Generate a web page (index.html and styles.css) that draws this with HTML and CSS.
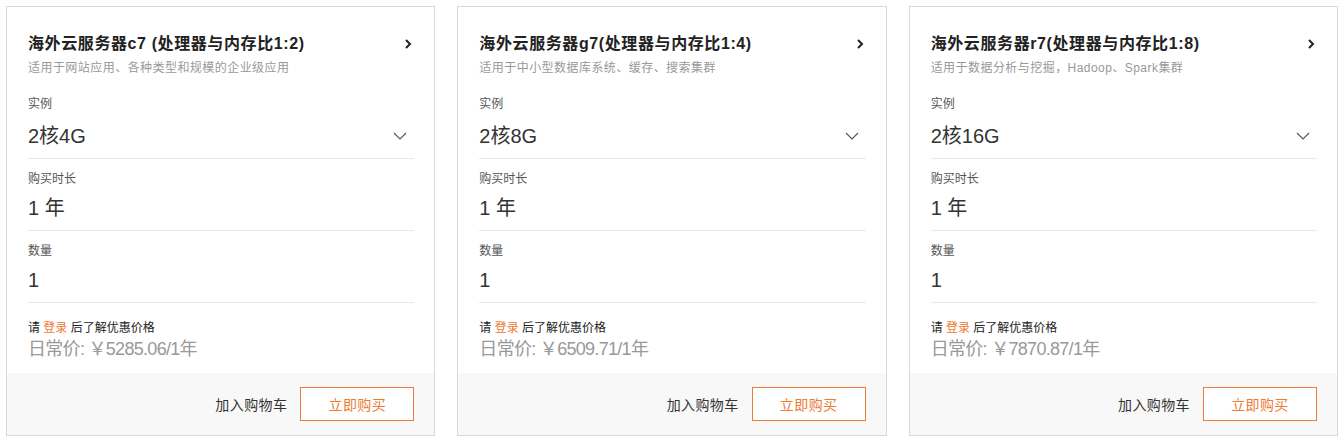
FILE: index.html
```html
<!DOCTYPE html>
<html lang="zh-CN">
<head>
<meta charset="utf-8">
<title>海外云服务器</title>
<link rel="stylesheet" href="styles.css">
</head>
<body>
<div class="cards">
  <div class="card">
    <div class="body">
      <div class="head">
        <div class="title">海外云服务器c7 (处理器与内存比1:2)</div>
        <svg class="arrow" width="8" height="12" viewBox="0 0 8 12"><path d="M2 2 L6 6 L2 10" fill="none" stroke="#222" stroke-width="2"/></svg>
      </div>
      <div class="desc">适用于网站应用、各种类型和规模的企业级应用</div>
      <div class="row first">
        <div class="label">实例</div>
        <div class="value select"><span>2核4G</span><svg width="14" height="8" viewBox="0 0 14 8"><path d="M1 1 L7 7 L13 1" fill="none" stroke="#555" stroke-width="1.1"/></svg></div>
      </div>
      <div class="row">
        <div class="label">购买时长</div>
        <div class="value">1 年</div>
      </div>
      <div class="row">
        <div class="label">数量</div>
        <div class="value">1</div>
      </div>
      <div class="login">请 <span class="link">登录</span> 后了解优惠价格</div>
      <div class="price">日常价: ￥5285.06/1年</div>
    </div>
    <div class="foot">
      <span class="cart">加入购物车</span>
      <span class="buy">立即购买</span>
    </div>
  </div>
  <div class="card">
    <div class="body">
      <div class="head">
        <div class="title">海外云服务器g7(处理器与内存比1:4)</div>
        <svg class="arrow" width="8" height="12" viewBox="0 0 8 12"><path d="M2 2 L6 6 L2 10" fill="none" stroke="#222" stroke-width="2"/></svg>
      </div>
      <div class="desc">适用于中小型数据库系统、缓存、搜索集群</div>
      <div class="row first">
        <div class="label">实例</div>
        <div class="value select"><span>2核8G</span><svg width="14" height="8" viewBox="0 0 14 8"><path d="M1 1 L7 7 L13 1" fill="none" stroke="#555" stroke-width="1.1"/></svg></div>
      </div>
      <div class="row">
        <div class="label">购买时长</div>
        <div class="value">1 年</div>
      </div>
      <div class="row">
        <div class="label">数量</div>
        <div class="value">1</div>
      </div>
      <div class="login">请 <span class="link">登录</span> 后了解优惠价格</div>
      <div class="price">日常价: ￥6509.71/1年</div>
    </div>
    <div class="foot">
      <span class="cart">加入购物车</span>
      <span class="buy">立即购买</span>
    </div>
  </div>
  <div class="card">
    <div class="body">
      <div class="head">
        <div class="title">海外云服务器r7(处理器与内存比1:8)</div>
        <svg class="arrow" width="8" height="12" viewBox="0 0 8 12"><path d="M2 2 L6 6 L2 10" fill="none" stroke="#222" stroke-width="2"/></svg>
      </div>
      <div class="desc">适用于数据分析与挖掘，Hadoop、Spark集群</div>
      <div class="row first">
        <div class="label">实例</div>
        <div class="value select"><span>2核16G</span><svg width="14" height="8" viewBox="0 0 14 8"><path d="M1 1 L7 7 L13 1" fill="none" stroke="#555" stroke-width="1.1"/></svg></div>
      </div>
      <div class="row">
        <div class="label">购买时长</div>
        <div class="value">1 年</div>
      </div>
      <div class="row">
        <div class="label">数量</div>
        <div class="value">1</div>
      </div>
      <div class="login">请 <span class="link">登录</span> 后了解优惠价格</div>
      <div class="price">日常价: ￥7870.87/1年</div>
    </div>
    <div class="foot">
      <span class="cart">加入购物车</span>
      <span class="buy">立即购买</span>
    </div>
  </div>
</div>
</body>
</html>
```
FILE: styles.css
```css
* { box-sizing: border-box; }
html, body { margin: 0; padding: 0; background: #fff; }
body {
  font-family: "Liberation Sans", "Noto Sans CJK SC", sans-serif;
  color: #333;
}
.cards {
  display: flex;
  gap: 22px;
  padding: 6px;
}
.card {
  flex: 1;
  height: 430px;
  border: 1px solid #d9d9d9;
  display: flex;
  flex-direction: column;
}
.body {
  flex: 1;
  padding: 25px 20px 0 21px;
}
.head {
  display: flex;
  align-items: center;
  justify-content: space-between;
  height: 24px;
  padding-right: 2px;
}
.title {
  font-size: 16px;
  font-weight: bold;
  line-height: 24px;
  letter-spacing: 0.6px;
  color: #222;
}
.arrow { display: block; }
.desc {
  margin-top: 3px;
  font-size: 12px;
  line-height: 18px;
  letter-spacing: 0.45px;
  color: #999;
}
.row {
  border-bottom: 1px solid #e8e8e8;
  padding: 11px 0 7px;
}
.row.first {
  padding-top: 18px;
  padding-bottom: 4px;
}
.label {
  font-size: 12px;
  line-height: 18px;
  color: #555;
}
.value {
  margin-top: 5px;
  font-size: 20px;
  line-height: 30px;
  color: #333;
}
.value.select {
  height: 36px;
  display: flex;
  align-items: center;
  justify-content: space-between;
  padding-right: 7px;
}
.login {
  margin-top: 16px;
  font-size: 12px;
  line-height: 18px;
  color: #222;
}
.link { color: #ed7a35; }
.price {
  font-size: 18px;
  line-height: 24px;
  letter-spacing: -0.7px;
  color: #999;
}
.foot {
  height: 62px;
  background: #f8f8f8;
  display: flex;
  align-items: center;
  justify-content: flex-end;
  padding: 0 20px 1px 0;
  gap: 13px;
}
.cart {
  font-size: 14px;
  letter-spacing: 0.4px;
  color: #333;
}
.buy {
  width: 114px;
  height: 34px;
  border: 1px solid #ed7a35;
  color: #ed7a35;
  font-size: 14px;
  letter-spacing: 0.4px;
  display: flex;
  align-items: center;
  justify-content: center;
  background: #fff;
}
```
